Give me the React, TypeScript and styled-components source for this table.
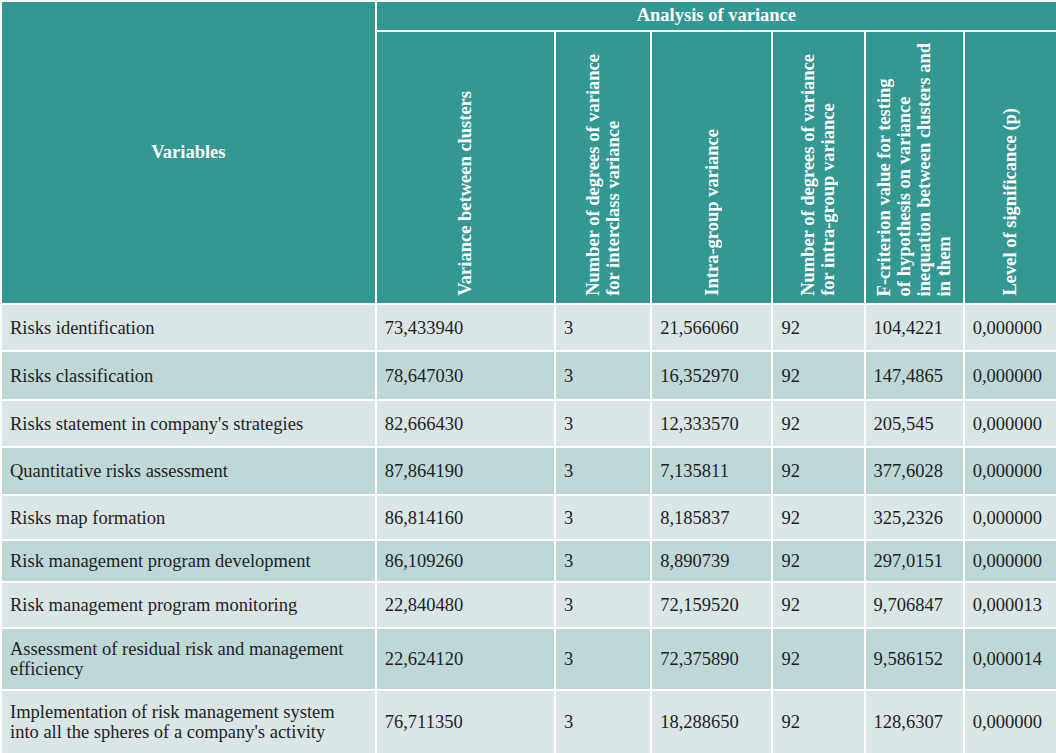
import React from "react";
import styled, { createGlobalStyle } from "styled-components";

const GlobalStyle = createGlobalStyle`
  html, body {
    margin: 0;
    padding: 0;
    background: #ffffff;
  }
  body {
    font-family: "Liberation Serif", "Times New Roman", serif;
  }
`;

const Table = styled.table`
  width: 1058px;
  border-collapse: separate;
  border-spacing: 2px;
  background: #ffffff;
  table-layout: fixed;
  font-family: "Liberation Serif", "Times New Roman", serif;
`;

const HeadCell = styled.th<{ $h?: number }>`
  background: #349892;
  color: #ffffff;
  font-weight: bold;
  font-size: 18.5px;
  line-height: 1.05;
  padding: 0;
  text-align: center;
  vertical-align: middle;
  ${(p) => (p.$h ? `height: ${p.$h}px;` : "")}
`;

const RotHeadCell = styled.th`
  background: #349892;
  color: #ffffff;
  font-weight: bold;
  font-size: 18.5px;
  line-height: 20px;
  padding: 0 0 3px 0;
  text-align: center;
  vertical-align: bottom;
  height: 268px;
`;

const Rotated = styled.div`
  display: inline-block;
  writing-mode: vertical-rl;
  transform: rotate(180deg);
  text-align: left;
  white-space: nowrap;
`;

const Row = styled.tr<{ $alt: boolean }>`
  background: ${(p) => (p.$alt ? "#bed7d7" : "#dae5e5")};
`;

const Cell = styled.td<{ $h: number }>`
  height: ${(p) => p.$h}px;
  padding: 0 20px 0 8px;
  font-size: 18.5px;
  line-height: 20px;
  color: #1e1e1e;
  vertical-align: middle;
  text-align: left;
`;

const widths = [372, 177, 94, 119, 90, 97, 91];

const columns: string[][] = [
  ["Variance between clusters"],
  ["Number of degrees of variance", "for interclass variance"],
  ["Intra-group variance"],
  ["Number of degrees of variance", "for intra-group variance"],
  [
    "F-criterion value for testing",
    "of hypothesis on variance",
    "inequation between clusters and",
    "in them",
  ],
  ["Level of significance (p)"],
];

const rows: { name: string; h: number; v: string[] }[] = [
  { name: "Risks identification", h: 45, v: ["73,433940", "3", "21,566060", "92", "104,4221", "0,000000"] },
  { name: "Risks classification", h: 47, v: ["78,647030", "3", "16,352970", "92", "147,4865", "0,000000"] },
  { name: "Risks statement in company's strategies", h: 45, v: ["82,666430", "3", "12,333570", "92", "205,545", "0,000000"] },
  { name: "Quantitative risks assessment", h: 46, v: ["87,864190", "3", "7,135811", "92", "377,6028", "0,000000"] },
  { name: "Risks map formation", h: 43, v: ["86,814160", "3", "8,185837", "92", "325,2326", "0,000000"] },
  { name: "Risk management program development", h: 40, v: ["86,109260", "3", "8,890739", "92", "297,0151", "0,000000"] },
  { name: "Risk management program monitoring", h: 44, v: ["22,840480", "3", "72,159520", "92", "9,706847", "0,000013"] },
  { name: "Assessment of residual risk and management efficiency", h: 60, v: ["22,624120", "3", "72,375890", "92", "9,586152", "0,000014"] },
  { name: "Implementation of risk management system into all the spheres of a company's activity", h: 62, v: ["76,711350", "3", "18,288650", "92", "128,6307", "0,000000"] },
];

export default function App() {
  return (
    <>
      <GlobalStyle />
      <Table>
        <colgroup>
          {widths.map((w, i) => (
            <col key={i} style={{ width: w }} />
          ))}
        </colgroup>
        <thead>
          <tr>
            <HeadCell rowSpan={2}>Variables</HeadCell>
            <HeadCell colSpan={6} $h={28}>
              Analysis of variance
            </HeadCell>
          </tr>
          <tr>
            {columns.map((lines, i) => (
              <RotHeadCell key={i}>
                <Rotated>
                  {lines.map((l, j) => (
                    <React.Fragment key={j}>
                      {j > 0 && <br />}
                      {l}
                    </React.Fragment>
                  ))}
                </Rotated>
              </RotHeadCell>
            ))}
          </tr>
        </thead>
        <tbody>
          {rows.map((r, i) => (
            <Row key={i} $alt={i % 2 === 1}>
              <Cell $h={r.h}>{r.name}</Cell>
              {r.v.map((v, j) => (
                <Cell key={j} $h={r.h}>
                  {v}
                </Cell>
              ))}
            </Row>
          ))}
        </tbody>
      </Table>
    </>
  );
}
